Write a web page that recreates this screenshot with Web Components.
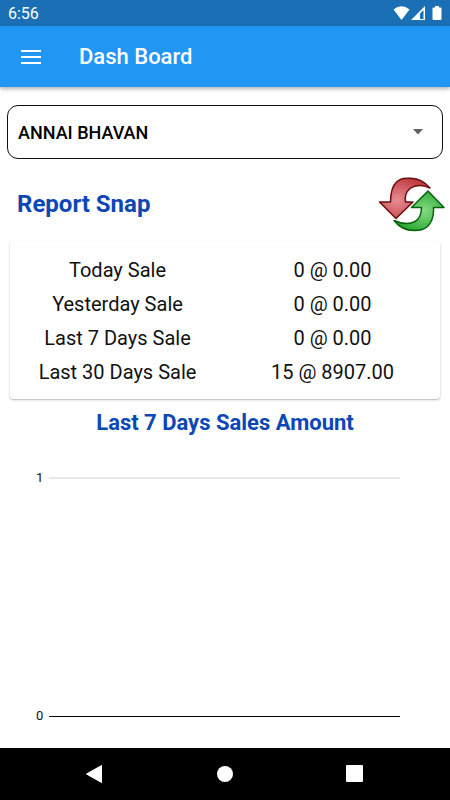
<!DOCTYPE html>
<html lang="en">
<head>
<meta charset="utf-8">
<meta name="viewport" content="width=device-width, initial-scale=1">
<title>Dash Board</title>
<style>
  html, body {
    height: 100%;
    margin: 0;
  }
  body {
    background-color: white;
    color: #111;
    font-family: Roboto, "Liberation Sans", sans-serif;
  }
</style>
</head>
<body>
<dash-board-page>
  <status-bar slot="top" time="6:56"></status-bar>
  <app-bar slot="top">Dash Board</app-bar>
  <branch-select branches="ANNAI BHAVAN"></branch-select>
  <report-header>Report Snap</report-header>
  <sales-card></sales-card>
  <sales-chart max="1" min="0">Last 7 Days Sales Amount</sales-chart>
  <nav-bar slot="bottom"></nav-bar>
</dash-board-page>

<script>
/* Attach an open shadow root filled with the given markup */
function addShadow(element, html) {
  const template = document.createElement("template");
  template.innerHTML = html;
  element.attachShadow({ mode: "open" });
  element.shadowRoot.appendChild(template.content.cloneNode(true));
}

class DashBoardPage extends HTMLElement {
  constructor() {
    super();
    addShadow(this, `
      <style>
        :host {
          display: flex;
          flex-direction: column;
          min-height: 100%;
        }
        main {
          display: flex;
          flex-direction: column;
          flex: 1;
          padding-top: 18px;
        }
      </style>
      <slot name="top"></slot>
      <main><slot></slot></main>
      <slot name="bottom"></slot>
    `);
  }
}

class StatusBar extends HTMLElement {
  constructor() {
    super();
    addShadow(this, `
      <style>
        :host {
          display: flex;
          align-items: center;
          justify-content: space-between;
          height: 26px;
          padding: 0 8px;
          background-color: #1a6fb5;
          color: white;
          font-size: 16px;
          line-height: 28px;
        }
        .time {
          padding-top: 2px;
        }
        svg {
          display: block;
        }
      </style>
      <span class="time"></span>
      <svg width="50" height="16" viewBox="0 0 50 16" fill="white" aria-hidden="true">
        <!-- wifi -->
        <path d="M1.500 4.500Q9.500-2 17.500 4.500L9.500 15Z"/>
        <!-- signal -->
        <path fill-rule="evenodd" d="M19 15L33 1V15ZM28 8.500V14H31.500V5Z"/>
        <path d="M29 8.500L30.500 7V14H29Z" fill="#1a6fb5"/>
        <!-- battery -->
        <path d="M43 1h4v1.500h1.500q1 0 1 1V14q0 1-1 1h-7q-1 0-1-1V3.500q0-1 1-1H43Z"/>
      </svg>
    `);
  }

  connectedCallback() {
    this.shadowRoot.querySelector(".time").textContent = this.getAttribute("time");
  }
}

class AppBar extends HTMLElement {
  constructor() {
    super();
    addShadow(this, `
      <style>
        :host {
          display: flex;
          align-items: center;
          gap: 30px;
          height: 61px;
          padding: 0 12px;
          background-color: #2196f3;
          color: white;
          box-shadow: 0 2px 4px rgba(0, 0, 0, 0.3);
        }
        button {
          display: flex;
          padding: 6px;
          border: 0;
          background: none;
        }
        h1 {
          margin: 0;
          font-size: 22px;
          font-weight: 500;
          line-height: 28px;
        }
      </style>
      <button type="button" aria-label="Open menu">
        <svg width="25" height="18" viewBox="0 0 25 18" fill="white">
          <path d="M3 2h20v2H3zM3 8h20v2H3zM3 14h20v2H3z"/>
        </svg>
      </button>
      <h1><slot></slot></h1>
    `);
  }
}

class BranchSelect extends HTMLElement {
  constructor() {
    super();
    addShadow(this, `
      <style>
        :host {
          display: grid;
          align-items: center;
          margin: 0 7px;
        }
        select, svg {
          grid-area: 1 / 1;
        }
        select {
          appearance: none;
          width: 100%;
          height: 54px;
          padding: 0 40px 0 10px;
          border: 1px solid #111;
          border-radius: 11px;
          background-color: white;
          color: black;
          font-family: inherit;
          font-size: 18px;
          font-weight: 500;
        }
        svg {
          justify-self: end;
          margin-right: 19px;
          pointer-events: none;
        }
      </style>
      <select aria-label="Branch"></select>
      <svg width="12" height="6" viewBox="0 0 12 6" fill="#616161" aria-hidden="true">
        <path d="M1 0h10L6 5.500z"/>
      </svg>
    `);
  }

  connectedCallback() {
    const select = this.shadowRoot.querySelector("select");
    for (const name of this.getAttribute("branches").split(",")) {
      select.add(new Option(name));
    }
  }
}

class ReportHeader extends HTMLElement {
  constructor() {
    super();
    addShadow(this, `
      <style>
        :host {
          display: flex;
          align-items: center;
          justify-content: space-between;
          height: 82px;
          padding: 8px 5px 0 17px;
          box-sizing: border-box;
        }
        h2 {
          margin: 0;
          color: #0d47b5;
          font-size: 24px;
          font-weight: 700;
          line-height: 30px;
        }
        button {
          display: flex;
          padding: 0;
          border: 0;
          background: none;
        }
      </style>
      <h2><slot></slot></h2>
      <button type="button" aria-label="Refresh">
        <svg width="68" height="56" viewBox="0 0 68 56">
          <defs>
            <radialGradient id="red" cx="0.35" cy="0.55" r="0.6">
              <stop offset="0" stop-color="#e58e92"/>
              <stop offset="1" stop-color="#c23a42"/>
            </radialGradient>
            <radialGradient id="green" cx="0.6" cy="0.5" r="0.6">
              <stop offset="0" stop-color="#84dc84"/>
              <stop offset="1" stop-color="#27a52e"/>
            </radialGradient>
          </defs>
          <path d="M2.500 26H13.500C13.500 17 15 10 20 5.500C24 2 28 2 34 2.200C42 2.500 48 6 53 12C45 8.500 38 9 33 12.500C29 16 27.500 20 28.500 26H36L19 42.500Z"
            fill="url(#red)" stroke="#6a0c10" stroke-width="1.500" stroke-linejoin="round"/>
          <path d="M51 15L67 31.500H56.500C57 40 55 46 50.500 50.500C47 54 43 54.500 37 54.500C29 54.500 22 51 17 44.500C25 48 32 48.500 38 45.500C43 42.500 44.500 38 44.500 31.500H34.500Z"
            fill="url(#green)" stroke="#07620e" stroke-width="1.500" stroke-linejoin="round"/>
        </svg>
      </button>
    `);
  }
}

class SalesCard extends HTMLElement {
  constructor() {
    super();
    addShadow(this, `
      <style>
        :host {
          display: block;
          margin: 0 10px;
          padding: 12px 0 10px;
          border-radius: 4px;
          background-color: white;
          box-shadow: 0 1px 2px rgba(0, 0, 0, 0.3);
        }
        table {
          width: 100%;
          table-layout: fixed;
          border-collapse: collapse;
        }
        th, td {
          height: 34px;
          padding: 0;
          font-size: 20px;
          font-weight: 400;
          line-height: 34px;
          text-align: center;
        }
      </style>
      <table>
        <tbody></tbody>
      </table>
    `);
  }

  connectedCallback() {
    this.rows = [
      { period: "Today Sale", amount: "0 @ 0.00" },
      { period: "Yesterday Sale", amount: "0 @ 0.00" },
      { period: "Last 7 Days Sale", amount: "0 @ 0.00" },
      { period: "Last 30 Days Sale", amount: "15 @ 8907.00" },
    ];
  }

  /**
   * Fill the table, one row for each period
   */
  set rows(list) {
    this.shadowRoot.querySelector("tbody").innerHTML = list
      .map((row) => `<tr><th scope="row">${row.period}</th><td>${row.amount}</td></tr>`)
      .join("");
  }
}

class SalesChart extends HTMLElement {
  constructor() {
    super();
    addShadow(this, `
      <style>
        :host {
          display: flex;
          flex-direction: column;
          flex: 1;
        }
        h2 {
          margin: 9px 0 0;
          color: #0d47b5;
          font-size: 22px;
          font-weight: 700;
          line-height: 30px;
          text-align: center;
        }
        .plot {
          display: flex;
          flex-direction: column;
          flex: 1;
          justify-content: space-between;
          padding: 32px 50px 24px 36px;
        }
        .tick {
          display: flex;
          align-items: center;
          gap: 6px;
          font-size: 13px;
          line-height: 16px;
        }
        .line {
          flex: 1;
          height: 2px;
          background-color: #e8e8e8;
        }
        .axis {
          height: 1px;
          background-color: black;
        }
      </style>
      <h2><slot></slot></h2>
      <div class="plot">
        <div class="tick"><span class="max"></span><div class="line"></div></div>
        <div class="tick"><span class="min"></span><div class="line axis"></div></div>
      </div>
    `);
  }

  connectedCallback() {
    this.shadowRoot.querySelector(".max").textContent = this.getAttribute("max");
    this.shadowRoot.querySelector(".min").textContent = this.getAttribute("min");
  }
}

class NavBar extends HTMLElement {
  constructor() {
    super();
    addShadow(this, `
      <style>
        :host {
          display: block;
          background-color: black;
        }
        nav {
          display: flex;
          align-items: center;
          justify-content: center;
          gap: 94px;
          height: 52px;
        }
        button {
          display: flex;
          padding: 9px;
          border: 0;
          background: none;
        }
      </style>
      <nav>
        <button type="button" aria-label="Back">
          <svg width="18" height="18" viewBox="0 0 18 18" fill="white"><path d="M15.500 0.500V17.500L0.500 9Z" stroke="white" stroke-linejoin="round"/></svg>
        </button>
        <button type="button" aria-label="Home">
          <svg width="18" height="18" viewBox="0 0 18 18" fill="white"><circle cx="9" cy="9" r="8"/></svg>
        </button>
        <button type="button" aria-label="Recent apps">
          <svg width="18" height="18" viewBox="0 0 18 18" fill="white"><rect x="0" y="0" width="17" height="17" rx="1"/></svg>
        </button>
      </nav>
    `);
  }
}

customElements.define("dash-board-page", DashBoardPage);
customElements.define("status-bar", StatusBar);
customElements.define("app-bar", AppBar);
customElements.define("branch-select", BranchSelect);
customElements.define("report-header", ReportHeader);
customElements.define("sales-card", SalesCard);
customElements.define("sales-chart", SalesChart);
customElements.define("nav-bar", NavBar);
</script>
</body>
</html>
